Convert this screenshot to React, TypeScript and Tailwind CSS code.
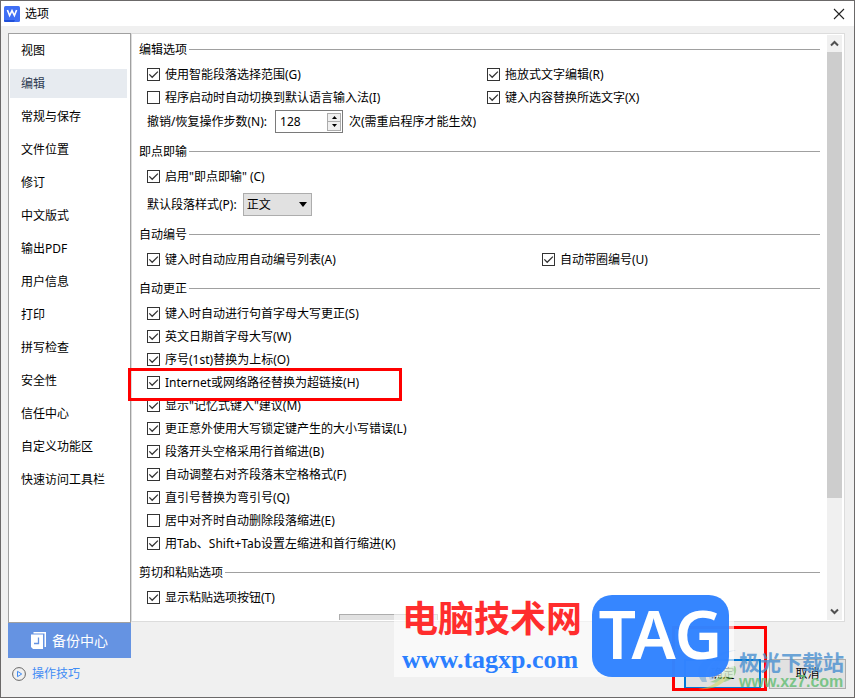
import { useState } from "react";

const navItems = [
  "视图",
  "编辑",
  "常规与保存",
  "文件位置",
  "修订",
  "中文版式",
  "输出PDF",
  "用户信息",
  "打印",
  "拼写检查",
  "安全性",
  "信任中心",
  "自定义功能区",
  "快速访问工具栏",
];

const correctionItems = [
  { label: "键入时自动进行句首字母大写更正(S)", checked: true },
  { label: "英文日期首字母大写(W)", checked: true },
  { label: "序号(1st)替换为上标(O)", checked: true },
  { label: "Internet或网络路径替换为超链接(H)", checked: true, marked: true },
  { label: '显示"记忆式键入"建议(M)', checked: true },
  { label: "更正意外使用大写锁定键产生的大小写错误(L)", checked: true },
  { label: "段落开头空格采用行首缩进(B)", checked: true },
  { label: "自动调整右对齐段落末空格格式(F)", checked: true },
  { label: "直引号替换为弯引号(Q)", checked: true },
  { label: "居中对齐时自动删除段落缩进(E)", checked: false },
  { label: "用Tab、Shift+Tab设置左缩进和首行缩进(K)", checked: true },
];

const CheckRow = ({ label, checked = true }: { label: string; checked?: boolean }) => {
  return (
    <label className="flex h-[23px] items-center gap-[5px] whitespace-nowrap">
      <span className="grid size-[13px] shrink-0">
        <input
          type="checkbox"
          defaultChecked={checked}
          className="peer col-start-1 row-start-1 size-[13px] appearance-none border border-[#333] bg-white"
        />
        <svg
          viewBox="0 0 13 13"
          className="pointer-events-none invisible col-start-1 row-start-1 size-[13px] peer-checked:visible"
          fill="none"
          stroke="#333"
          strokeWidth="1.3"
        >
          <path d="M2.3 6.4 5.2 9.3 10.9 3.6" />
        </svg>
      </span>
      {label}
    </label>
  );
};

const Section = ({ title, children }: { title: string; children: React.ReactNode }) => {
  return (
    <section className="mb-[9px]">
      <div className="flex h-4 items-center gap-[2px]">
        <h2 className="pt-[2px]">{title}</h2>
        <div className="h-px flex-1 bg-[#a0a0a0]" />
      </div>
      <div className="mt-[6px] pl-2">{children}</div>
    </section>
  );
};

const ScrollBar = () => {
  return (
    <div className="mr-px flex w-[15px] shrink-0 flex-col bg-[#f0f0f0]">
      <button aria-label="向上滚动" className="flex h-[17px] items-center justify-center">
        <svg width="9" height="7" viewBox="0 0 9 7" fill="none" stroke="#505050" strokeWidth="2">
          <path d="M1 5.5 4.5 2 8 5.5" />
        </svg>
      </button>
      <div className="flex-1">
        <div className="h-[81%] bg-[#cdcdcd]" />
      </div>
      <button aria-label="向下滚动" className="flex h-[17px] items-center justify-center">
        <svg width="9" height="7" viewBox="0 0 9 7" fill="none" stroke="#505050" strokeWidth="2">
          <path d="M1 1.5 4.5 5 8 1.5" />
        </svg>
      </button>
    </div>
  );
};

const Watermarks = () => {
  return (
    <div className="pointer-events-none">
      {/* Download site mark */}
      <div className="absolute right-[10px] bottom-[6px] flex items-center">
        <svg width="44" height="42" viewBox="0 0 44 42" className="opacity-50">
          <path d="M7 33C-6 16 16 3 41 1 22 7 6 18 12 33Z" fill="#5b9bd5" />
          <path d="M15 31C9 18 22 9 34 6 25 13 18 20 19 30Z" fill="#8fbce6" />
          <path d="M15 33C26 30 29 18 40 17 45 25 34 37 15 33Z" fill="#6cc25a" />
          <path d="M3 40C16 39 24 32 31 25 34 33 19 42 3 40Z" fill="#cbd84f" />
        </svg>
        <div className="opacity-80">
          <p className="text-[21px] leading-6 font-bold text-[#4a90d0]">极光下载站</p>
          <p className="font-['Liberation_Sans',sans-serif] text-base leading-4 font-bold text-[#62bd72]">
            www.xz7.com
          </p>
        </div>
      </div>
      {/* Tech site mark */}
      <div className="absolute right-[120px] bottom-5 flex h-[82px] w-[340px] items-end justify-between bg-white/60 pl-2">
        <div className="pb-px">
          <p className="mb-[3px] text-4xl leading-[44px] font-bold whitespace-nowrap text-[#ff2d2d]">
            电脑技术网
          </p>
          <p className="font-['Liberation_Serif',serif] text-[26px] leading-8 font-bold text-[#2b7fff]">
            www.tagxp.com
          </p>
        </div>
        <div className="mr-[5px] flex h-[82px] w-[137px] items-center justify-center rounded-[20px] bg-[#2b7fff]/95 pb-[6px] font-['Noto_Sans',sans-serif] text-[66px] font-semibold text-white">
          TAG
        </div>
      </div>
    </div>
  );
};

const App = () => {
  const [active, setActive] = useState("编辑");

  return (
    <div className="relative flex h-screen min-h-[500px] flex-col border border-[#6b6969] bg-[#f0f0f0] font-['Noto_Sans','Noto_Sans_CJK_SC',sans-serif] text-xs leading-4 text-black">
      {/* Title bar */}
      <header className="flex h-[25px] shrink-0 items-center bg-white pr-[9px] pl-[3px]">
        <svg width="16" height="16" viewBox="0 0 16 16" className="mr-[5px]">
          <rect width="16" height="16" rx="1.5" fill="#3f6ff5" />
          <path d="M0 14H11L10 16H1.5A1.5 1.5 0 0 1 0 14.5Z" fill="#1f4fd8" />
          <path d="M3.4 4 5.6 9.6 8 4.6 10.4 9.6 12.6 4" fill="none" stroke="#fff" strokeWidth="1.6" />
        </svg>
        <h1 className="flex-1">选项</h1>
        <button aria-label="关闭">
          <svg width="12" height="12" viewBox="0 0 12 12" stroke="#222" strokeWidth="1.1">
            <path d="M1 1 11 11M11 1 1 11" />
          </svg>
        </button>
      </header>

      <div className="flex min-h-0 flex-1 pt-[7px] pr-2 pl-[7px]">
        {/* Left column */}
        <div className="flex w-[123px] shrink-0 flex-col">
          <nav className="flex flex-1 flex-col gap-1 border border-[#a0a0a0] bg-white pt-[2px] pr-[3px] pl-px">
            {navItems.map((item) => (
              <button
                key={item}
                onClick={() => setActive(item)}
                className={`h-[29px] pl-[11px] text-left ${
                  item === active ? "bg-[#e7ebf0] text-[#2f3b52]" : ""
                }`}
              >
                {item}
              </button>
            ))}
          </nav>
          <button className="flex h-[35px] items-center justify-center gap-[5px] bg-[#6593e2] text-sm text-white">
            <svg width="16" height="17" viewBox="0 0 16 17">
              <path d="M2.5 0H15V15H13.5V1.5H2.5Z" fill="#fff" />
              <path d="M0 2.5H12V17H2L0 15Z" fill="#fff" />
              <path d="M7.5 5.5V11.5H3" fill="none" stroke="#6593e2" strokeWidth="1.3" />
            </svg>
            备份中心
          </button>
          <a href="#tips" className="mb-[7px] flex h-8 items-center gap-[6px] pl-1 text-[#3f8cf5]">
            <svg width="14" height="14" viewBox="0 0 14 14" fill="none">
              <circle cx="7" cy="7" r="6.4" stroke="#666" />
              <path d="M5.5 4.3V9.7L9.7 7Z" stroke="#3f8cf5" />
            </svg>
            操作技巧
          </a>
        </div>

        {/* Right column */}
        <div className="flex min-w-0 flex-1 flex-col">
          <main className="mr-px flex min-h-0 flex-1 border border-[#dcdcdc] bg-white p-px">
            {/* reaches past the left edge so the red frame is not cut off */}
            <div className="relative -ml-2 min-w-0 flex-1 overflow-y-auto pt-[6px] pr-[7px] pl-[14px] [scrollbar-width:none]">
              <Section title="编辑选项">
                <div className="grid grid-cols-[340px_1fr]">
                  <CheckRow label="使用智能段落选择范围(G)" />
                  <CheckRow label="拖放式文字编辑(R)" />
                  <CheckRow label="程序启动时自动切换到默认语言输入法(I)" checked={false} />
                  <CheckRow label="键入内容替换所选文字(X)" />
                </div>
                <div className="flex h-[25px] items-center whitespace-nowrap">
                  <label htmlFor="undo-steps">撤销/恢复操作步数(N):</label>
                  <div className="mr-[6px] ml-2 flex h-[23px] w-[68px] items-center border border-[#7a7a7a] bg-white pr-px pl-1">
                    <input
                      id="undo-steps"
                      type="text"
                      defaultValue="128"
                      className="w-full min-w-0 flex-1 outline-none"
                    />
                    <div className="flex w-[14px] flex-col">
                      <button aria-label="增加" className="flex h-[9px] items-center justify-center border border-[#acacac] bg-[#f0f0f0]">
                        <svg width="5" height="3" viewBox="0 0 5 3">
                          <path d="M0 3 2.5 0 5 3Z" />
                        </svg>
                      </button>
                      <button aria-label="减少" className="flex h-[9px] items-center justify-center border border-t-0 border-[#acacac] bg-[#f0f0f0]">
                        <svg width="5" height="3" viewBox="0 0 5 3">
                          <path d="M0 0 2.5 3 5 0Z" />
                        </svg>
                      </button>
                    </div>
                  </div>
                  <span>次(需重启程序才能生效)</span>
                </div>
              </Section>

              <Section title="即点即输">
                <CheckRow label={'启用"即点即输" (C)'} />
                <div className="flex items-center pt-[5px] pb-px">
                  <label htmlFor="default-style">默认段落样式(P):</label>
                  <div className="ml-[6px] grid h-[23px] w-[69px] items-center">
                    <select
                      id="default-style"
                      className="col-start-1 row-start-1 h-[23px] appearance-none border border-[#adadad] bg-[#e1e1e1] pl-[3px]"
                    >
                      <option>正文</option>
                    </select>
                    <svg width="8" height="5" viewBox="0 0 8 5" className="pointer-events-none col-start-1 row-start-1 mr-[5px] justify-self-end">
                      <path d="M0 0H8L4 5Z" />
                    </svg>
                  </div>
                </div>
              </Section>

              <Section title="自动编号">
                <div className="grid grid-cols-[395px_1fr]">
                  <CheckRow label="键入时自动应用自动编号列表(A)" />
                  <CheckRow label="自动带圈编号(U)" />
                </div>
              </Section>

              <Section title="自动更正">
                {correctionItems.map((item) => (
                  <div key={item.label} className="relative">
                    <CheckRow label={item.label} checked={item.checked} />
                    {item.marked && (
                      <div className="pointer-events-none absolute -top-[3px] -left-[19px] z-10 h-[33px] w-[274px] border-3 border-[#ff0000]" />
                    )}
                  </div>
                ))}
              </Section>

              <Section title="剪切和粘贴选项">
                <CheckRow label="显示粘贴选项按钮(T)" />
                <div className="pt-[5px]">
                  <select
                    aria-label="粘贴方式"
                    className="ml-48 block h-[23px] w-[99px] appearance-none border border-[#adadad] bg-[#e1e1e1]"
                  />
                </div>
              </Section>
            </div>
            <ScrollBar />
          </main>

          {/* Dialog buttons */}
          <footer className="flex h-[75px] shrink-0 items-end justify-end gap-2 pb-2">
            <div className="relative">
              <button className="h-[30px] w-[77px] border-2 border-[#0078d7] bg-[#e1e1e1]">确定</button>
              <div className="pointer-events-none absolute -top-[33px] -right-[6px] -bottom-[2px] -left-3 border-3 border-[#ff0000]" />
            </div>
            <button className="h-[30px] w-[77px] border border-[#adadad] bg-[#e1e1e1]">取消</button>
          </footer>
        </div>
      </div>

      <Watermarks />
    </div>
  );
};

export default App;
